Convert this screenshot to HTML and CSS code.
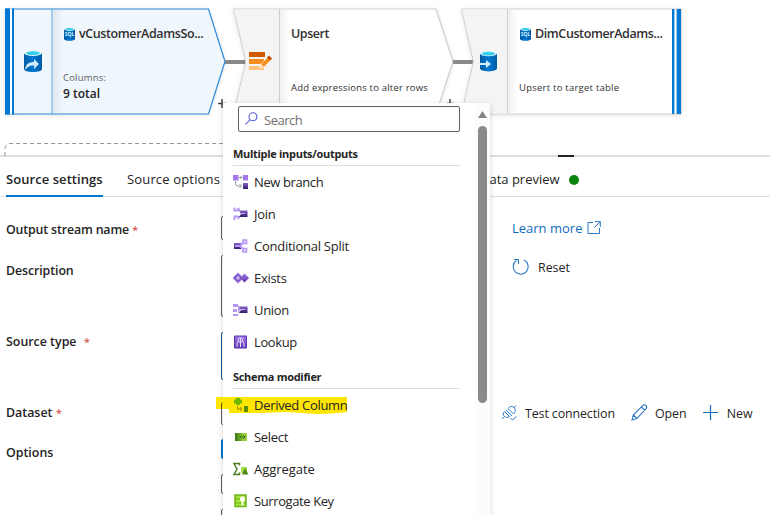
FILE: index.html
```html
<!DOCTYPE html>
<html lang="en">
<head>
<meta charset="utf-8">
<title>Data flow</title>
<link rel="stylesheet" href="styles.css">
</head>
<body>
<svg class="defs" width="0" height="0" aria-hidden="true">
  <defs>
    <linearGradient id="purple" x1="0" y1="0" x2="0" y2="1"><stop offset="0" stop-color="#a678ee"/><stop offset="1" stop-color="#5b34a8"/></linearGradient>
    <linearGradient id="deep" x1="0" y1="0" x2="0" y2="1"><stop offset="0" stop-color="#8661c5"/><stop offset="1" stop-color="#341a6e"/></linearGradient>
    <linearGradient id="green" x1="0" y1="0" x2="1" y2="0"><stop offset="0" stop-color="#3f7312"/><stop offset="1" stop-color="#76bc2d"/></linearGradient>
    <linearGradient id="blue" x1="0" y1="0" x2="1" y2="0"><stop offset="0" stop-color="#005ba1"/><stop offset=".5" stop-color="#0078d4"/><stop offset="1" stop-color="#005ba1"/></linearGradient>
    <linearGradient id="shade" x1="0" y1="0" x2="1" y2="0"><stop offset="0" stop-color="#000" stop-opacity=".06"/><stop offset="1" stop-color="#000" stop-opacity="0"/></linearGradient>
    <symbol id="cylinder" viewBox="0 0 18 22"><path d="M0 3v16c0 1.700 4 3 9 3s9-1.300 9-3V3z" fill="url(#blue)"/><ellipse cx="9" cy="3" rx="9" ry="3" fill="#e8f6fc"/><ellipse cx="9" cy="3.200" rx="6.800" ry="1.900" fill="#32cfea"/></symbol>
  </defs>
</svg>

<main class="app">
  <section class="canvas">
    <svg class="wires" width="770" height="156" viewBox="0 0 770 156">
      <path d="M5 156v-6q0-6.500 6-6.500h214" fill="none" stroke="#969696" stroke-dasharray="4 3"/>
      <path d="M222 99v9M218 103.500h8M450 99v9M446 103.500h8" stroke="#444" stroke-width="1.500"/>
    </svg>

    <article class="node source">
      <svg class="shape" width="222" height="108" viewBox="0 0 222 108">
        <path d="M.5 1H203.500L220 53.500 203.500 106H.5z" fill="#eff6fc" stroke="#2b88d8" stroke-width="1.200"/>
        <path d="M0 .5h9v106H0z" fill="#0078d4"/><path d="M5 .5h2v106H5z" fill="#fff"/>
        <path d="M47 1v105" stroke="#5ba3e0"/><path d="M48 2h10v103H48z" fill="url(#shade)"/>
        <use href="#cylinder" x="19" y="42" width="18" height="22"/>
        <path d="M20 62c.5-6 4-8 9-8v-3l5 5-5 5v-3.500c-4-.5-6 1-9 4.500z" fill="#cfeafd"/>
      </svg>
      <div class="node-text">
        <h3><svg width="11" height="14" viewBox="0 0 11 14"><use href="#cylinder" width="11" height="14"/><text x="5.500" y="9.300" class="sql">SQL</text></svg><span>vCustomerAdamsSo...</span></h3>
        <p class="hint">Columns:</p><p class="total">9 total</p>
      </div>
    </article>
    <i class="link first"></i>
    <article class="node upsert">
      <svg class="shape" width="222" height="108" viewBox="0 0 222 108">
        <path d="M.5 1H203L220 53.500 203 106H.5L13 53.500z" fill="#fff" stroke="#cfcfcf" stroke-width="1.200"/>
        <path d="M1 1.500H47v104H1L13.500 53.500z" fill="#f4f4f4"/><path d="M46.500 1v105" stroke="#cfcfcf"/><path d="M47 2h10v103H47z" fill="url(#shade)"/>
        <path d="M16 44h16v5H16z" fill="#d45a00"/><path d="M16 51h15v5H16z" fill="#f78d1e"/><path d="M16 58h15v4H16z" fill="#ffc27c"/>
        <path d="M27 60l1-4 7-7 3 3-7 7z" fill="#f78d1e" stroke="#fff" stroke-width=".5"/><path d="M34 49.500l2-2 3 3-2 2z" fill="#bd4b00"/><path d="M27 60l1-4 3 3z" fill="#ffe2c2"/>
      </svg>
      <div class="node-text"><h3><span class="plain">Upsert</span></h3><p class="note">Add expressions to alter rows</p></div>
    </article>
    <i class="link second"></i>
    <article class="node sink">
      <svg class="shape" width="222" height="108" viewBox="0 0 222 108">
        <path d="M.5 1H220v105H.5L12.500 53.500z" fill="#fff" stroke="#cfcfcf" stroke-width="1.200"/>
        <path d="M1 1.500H46v104H1L13 53.500z" fill="#f4f4f4"/><path d="M46.500 1v105" stroke="#cfcfcf"/><path d="M47 2h10v103H47z" fill="url(#shade)"/>
        <path d="M211 1h2v105h-2zM216 1h4v105h-4z" fill="#0078d4"/><path d="M213 1h1v105h-1zM215 1h1v105h-1z" fill="#9ccbf0"/>
        <use href="#cylinder" x="19" y="42" width="17" height="22"/>
        <path d="M19 55h6v-3l5 4-5 4v-3h-6z" fill="#d4edff"/>
      </svg>
      <div class="node-text">
        <h3><svg width="11" height="14" viewBox="0 0 11 14"><use href="#cylinder" width="11" height="14"/><text x="5.500" y="9.300" class="sql">SQL</text></svg><span>DimCustomerAdams...</span></h3>
        <p class="note">Upsert to target table</p>
      </div>
    </article>
  </section>

  <section class="panel">
    <div class="grip"></div>
    <nav class="tabs">
      <a class="tab active">Source settings</a>
      <a class="tab options">Source options</a>
      <a class="tab preview">Data preview<i class="dot"></i></a>
    </nav>
    <div class="form">
      <div class="row r-name"><label>Output stream name <b>*</b></label><span class="field"></span>
        <a class="learn"><span>Learn more</span><svg width="14" height="14" viewBox="0 0 14 14" fill="none" stroke="#2b78c5"><path d="M6 1.500H1v11h11.500V7M8 .7h5.300V6M13.300.7L7.500 6.500"/></svg></a></div>
      <div class="row r-desc"><label>Description</label><span class="field"></span>
        <a class="reset"><svg width="18" height="18" viewBox="0 0 18 18" fill="none" stroke="#2b78c5" stroke-width="1.100"><path d="M4.500 2.500A7.500 7.500 0 1 0 12 2M2 1.500h4.500V6"/></svg><span>Reset</span></a></div>
      <div class="row r-type"><label>Source type <b class="far">*</b></label><span class="field"></span></div>
      <div class="row r-data"><label>Dataset <b>*</b></label><span class="field"></span>
        <div class="actions">
          <a class="test"><svg width="17" height="17" viewBox="0 0 17 17" fill="none" stroke="#2b78c5"><path d="M1 15l2.500-2.500M12.500 4L15 1.500M5 6l6 6M3.500 7.500C1.500 9.500 2 11 3.300 12.300S6.500 14 8.500 12.500zM7 4.500l5.500 5.500C14.500 8 15 5.500 13 3.500S9 2.500 7 4.500zM9.500 14l2 2 4-3.500"/></svg><span>Test connection</span></a>
          <a class="open"><svg width="17" height="17" viewBox="0 0 17 17" fill="none" stroke="#2b78c5" stroke-width="1.100"><path d="M1 16l1.300-5L12 1.300c2-1.500 4.500 1 3.300 3L5.800 14.500zM10.500 3l3.500 3.500M2.500 11l3.300 3.400"/></svg><span>Open</span></a>
          <a class="new"><svg width="15" height="15" viewBox="0 0 15 15" stroke="#0f6cbd" stroke-width="1.200"><path d="M7.500 0v15M0 7.500h15"/></svg><span>New</span></a>
        </div></div>
      <div class="row r-opt"><label>Options</label><div class="checks"><span class="box on"></span><span class="box"></span><span class="box"></span></div></div>
    </div>
  </section>

  <aside class="menu">
    <div class="menu-body">
      <div class="search"><svg width="13" height="13" viewBox="0 0 13 13" fill="none" stroke="#5b62d8" stroke-width="1.100"><circle cx="8" cy="4.800" r="4"/><path d="M5 7.800L.5 12.300"/></svg><span>Search</span></div>
      <h4><span>Multiple inputs/outputs</span></h4>
      <ul>
        <li><svg viewBox="0 0 16 16"><path d="M0 1h5.500v5.500H0zM10 1h5v5.500h-5z" fill="#a678ee"/><path d="M10 9h5v6h-5z" fill="url(#deep)"/><path d="M6 3.500h3M2.500 7v2.500q0 2.500 2.500 2.500h3M6.500 10l2 2-2 2M7.500 2L9 3.500 7.500 5" fill="none" stroke="#999"/></svg><span class="t-branch">New branch</span></li>
        <li><svg viewBox="0 0 16 16"><path d="M1.500 1.500v3H5M1.500 14v-3.500H5M5 2l1.500 3M5 13l1.500-3" fill="none" stroke="#b796f5" stroke-width="2"/><path d="M6 4.500h8.500v6.500H6l2-3z" fill="url(#deep)"/><path d="M8 7.500h4" stroke="#c9b0ff"/></svg><span>Join</span></li>
        <li><svg viewBox="0 0 16 16"><path d="M1 5h7v6H1z" fill="url(#deep)"/><path d="M2 8h5l4-4M7 8l4 4" fill="none" stroke="#b796f5" stroke-width="2"/><path d="M10 2h3.500v3.500H10zM10 10.500h3.500V14H10z" fill="#eee4ff" stroke="#b796f5" stroke-width="1.700"/></svg><span class="t-split">Conditional Split</span></li>
        <li><svg viewBox="0 0 16 16"><path d="M5 2.500L10.500 8 5 13.500-.5 8z" fill="#9873da"/><circle cx="5" cy="8" r="2.500" fill="#c7aef4" stroke="#6540ae"/><path d="M11.500 3.500L16 8l-4.500 4.500L7 8z" fill="url(#purple)"/></svg><span>Exists</span></li>
        <li><svg viewBox="0 0 16 16"><path d="M0 2h5v3H0zM0 7h4v3H0zM0 12h5v2H0zM5 3l3 3.500L5 12z" fill="#b796f5"/><path d="M6 4.500h8.500v6.500H6l2-3z" fill="url(#deep)"/><path d="M8 7.500h4" stroke="#d8c6ff"/></svg><span>Union</span></li>
        <li><svg viewBox="0 0 16 16"><path d="M1.500 2h12v12h-12z" fill="url(#purple)" stroke="#6036b2"/><path d="M4 13V9l2-3M7.500 13V4M11 13V9L9 6" fill="none" stroke="#e5d9ff"/><circle cx="7.500" cy="6" r="2.300" fill="none" stroke="#e5d9ff"/></svg><span class="t-lookup">Lookup</span></li>
      </ul>
      <h4 class="second-head"><span>Schema modifier</span></h4>
      <ul>
        <li><svg class="hl" width="132" height="18" viewBox="0 0 132 18"><path d="M0 0h131v15q-15 2-30 2l-30-2-25 1H13v-4H0z" fill="#ffe600"/><path d="M5.500 12V7q0-1 1-1.500" fill="none" stroke="#61580a"/></svg><svg viewBox="0 0 16 16"><path d="M1 2.500h2V1h4v1.500h2v4H7V8H3V6.500H1z" fill="#71b800"/><path d="M4.500 9v3h4M7 10l2 2-2 2" fill="none" stroke="#a58b00"/><path d="M11 9h4v6h-4z" fill="#568f08"/></svg><span>Derived Column</span></li>
        <li><svg viewBox="0 0 16 16"><path d="M2 4h7v8H2z" fill="url(#green)"/><path d="M9 4h5v8H9z" fill="#94ce40"/><path d="M7 8h5M10 6l2 2-2 2" fill="none" stroke="#35640d"/></svg><span>Select</span></li>
        <li><svg viewBox="0 0 16 16"><path d="M6.500 4.500V2.500H1L4 8l-3 5.500h5.500v-2" fill="none" stroke="#4c7d20" stroke-width="1.500"/><path d="M8 6h6v6H8z" fill="#a4df4d"/><path d="M12 7l3.500 6.500H9z" fill="#4c8716"/></svg><span class="t-agg">Aggregate</span></li>
        <li><svg viewBox="0 0 16 16"><path d="M2 2h11v11.500H2z" fill="#a5e33b" stroke="#6fb41b" stroke-width="1.500"/><path d="M2 6h11M2 10h11" stroke="#6fb41b"/><circle cx="9.500" cy="6" r="2.500" fill="#fff"/><path d="M9.500 6v6.500" stroke="#fff" stroke-width="1.800"/></svg><span class="t-key">Surrogate Key</span></li>
      </ul>
    </div>
    <div class="scroll"><i class="arrow"></i><i class="thumb"></i></div>
  </aside>
</main>
</body>
</html>
```
FILE: styles.css
```css
* { box-sizing: border-box; }
body { margin: 0; background: #fff; color: #242424; font: 12.4px/16px "Open Sans", "Noto Sans", sans-serif; }
h3, h4, p, ul { margin: 0; padding: 0; }
.defs { position: absolute; }
.app { position: relative; width: 770px; height: 515px; overflow: hidden; }

.canvas { position: relative; height: 155px; }
.wires { position: absolute; left: 0; top: 0; }
.node { position: absolute; top: 8px; width: 222px; height: 108px; }
.source { left: 5px; }
.upsert { left: 233px; }
.sink { left: 461px; }
.shape { position: absolute; left: 0; top: 0; filter: drop-shadow(0 1px 2px rgba(0,0,0,.1)); }
.link { position: absolute; top: 60px; width: 20px; height: 4px; background: #8a8886; }
.link.first { left: 225px; }
.link.second { left: 453px; }
.node-text { position: relative; padding: 18px 0 0 58px; white-space: nowrap; }
.node h3 { display: flex; gap: 4px; align-items: center; height: 16px; font-size: 12.5px; font-weight: 600; color: #323130; }
.node h3 svg { margin-left: 1px; }
.node h3 span { letter-spacing: -.4px; }
.node h3 .plain { letter-spacing: -.45px; }
.sql { font: 700 5px "Open Sans", sans-serif; fill: #d9efff; text-anchor: middle; }
.hint { margin-top: 29px; font-size: 9.5px; line-height: 14px; letter-spacing: .2px; color: #605e5c; }
.total { margin-top: 1px; font-size: 12px; line-height: 16px; font-weight: 600; }
.note { margin-top: 39px; font-size: 9.5px; line-height: 14px; letter-spacing: .2px; color: #323130; }
.sink .note { letter-spacing: .24px; }

.panel { border-top: 2px solid #dedede; }
.grip { width: 16px; height: 2px; margin: -2px 0 0 558px; background: #252423; }
.tabs { display: flex; height: 40px; border-bottom: 1px solid #dcdcdc; font-size: 13px; line-height: 16px; white-space: nowrap; }
.tab { padding-top: 14px; height: 40px; }
.active { margin-left: 6px; width: 97px; font-weight: 600; letter-spacing: .06px; border-bottom: 2px solid #0078d4; }
.options { margin-left: 24px; width: 94px; letter-spacing: .16px; }
.preview { display: flex; margin-left: 259px; gap: 9px; }
.dot { width: 10px; height: 10px; margin-top: 4px; border-radius: 50%; background: #0a840a; }

.row { display: grid; grid-template-columns: 215px 60px auto; padding-left: 6px; align-items: start; white-space: nowrap; }
label { font-weight: 600; padding-top: 5px; }
.r-name label { padding-top: 6px; letter-spacing: -.16px; }
.r-desc label { padding-top: 8px; letter-spacing: -.1px; }
label b { font-weight: 400; font-size: 11.5px; color: #d13438; }
label .far { margin-left: 4px; }
.field { height: 24px; border: 1px solid #616161; border-radius: 2px; }
.r-name { padding-top: 19px; height: 58px; }
.r-desc { height: 77px; }
.r-desc .field { height: 62px; }
.r-type { height: 69px; }
.r-type label { padding-top: 2px; }
.r-type .field { height: 48px; border-color: #115ea3; }
.r-data { height: 38px; }
.r-data label { padding-top: 4px; }
.r-opt label { padding-top: 6px; }
.row a { display: flex; align-items: center; }
.learn { margin: 4px 0 0 231px; gap: 5px; color: #0f6cbd; font-size: 13px; }
.reset { margin: 4px 0 0 231px; gap: 8px; height: 18px; }
.reset svg { margin-top: -3px; }
.actions { display: flex; margin: 4px 0 0 221px; height: 18px; }
.test, .open, .new { gap: 7px; }
.actions svg { margin: -3px 0 0 -1px; }
.test span { letter-spacing: -.1px; }
.open { margin-left: 17px; }
.new { margin-left: 17px; }
.new span { margin-left: 2px; }
.checks { display: flex; flex-direction: column; gap: 15px; }
.box { width: 20px; height: 20px; border: 1px solid #616161; border-radius: 2px; }
.on { background: #0078d4; border-color: #0078d4; }

.menu { position: absolute; left: 223px; top: 103px; width: 267px; height: 420px; display: flex; background: #fff; box-shadow: 0 2px 6px rgba(0,0,0,.16); }
.menu-body { width: 252px; padding: 3px 0 0 10px; }
.search { display: flex; align-items: center; gap: 6px; margin-left: 5px; width: 222px; height: 26px; padding-left: 6px; border: 1px solid #616161; border-radius: 2px; font-size: 13px; color: #707070; }
.search svg { margin-top: -2px; }
.search span { padding-top: 2px; letter-spacing: -.5px; }
h4 { width: 227px; height: 23px; margin-top: 11px; border-bottom: 1px solid #dedede; font-size: 11px; line-height: 21px; font-weight: 700; }
h4 span { letter-spacing: -.3px; }
h4.second-head { margin-top: 8px; }
ul { list-style: none; }
li { position: relative; display: flex; align-items: center; gap: 5px; height: 32px; font-size: 13px; white-space: nowrap; letter-spacing: -.3px; }
.t-branch, .t-key, .t-lookup { letter-spacing: -.4px; }
.t-agg { letter-spacing: -.05px; }
.t-split { letter-spacing: -.25px; }
li > svg:not(.hl) { position: relative; width: 16px; height: 16px; }
.hl { position: absolute; left: -17px; top: 8px; }
li span { position: relative; }
.scroll { width: 15px; padding: 8px 0 0 3px; background: #fcfcfc; }
.arrow { display: block; width: 9px; height: 7px; background: #858585; clip-path: polygon(50% 0, 100% 100%, 0 100%); }
.thumb { display: block; width: 9px; height: 277px; margin-top: 8px; border-radius: 5px; background: #8a8a8a; }
```
